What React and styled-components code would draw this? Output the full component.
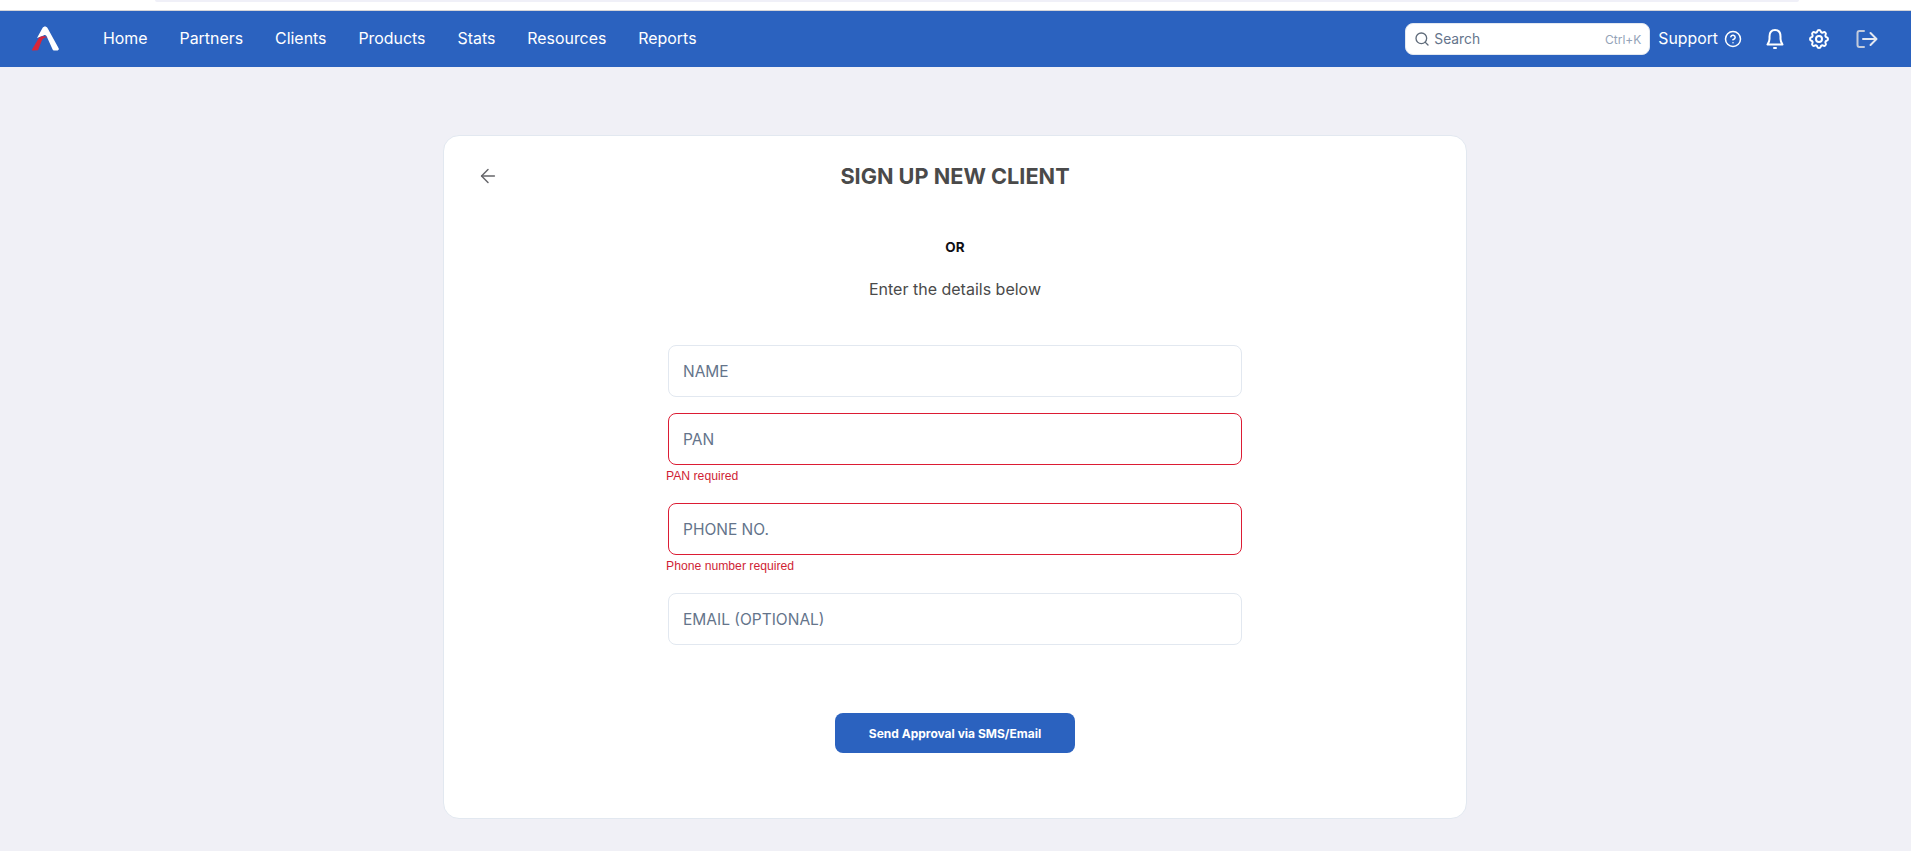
import styled, { createGlobalStyle } from "styled-components";
import { ArrowLeft, CircleHelp, Search } from "lucide-react";
import { TbSettings } from "react-icons/tb";

const GlobalStyle = createGlobalStyle`
  html, body {
    margin: 0;
    padding: 0;
    background: #f0f0f6;
    font-family: "Inter", "Liberation Sans", sans-serif;
  }
  * {
    box-sizing: border-box;
  }
`;

const NAV_LINKS = ["Home", "Partners", "Clients", "Products", "Stats", "Resources", "Reports"];

const Logo = () => (
  <LogoWrap>
    <svg width="27" height="25" viewBox="0 0 27 25">
      <path
        d="M10.5 2 C11.8 0 14.2 0 15.5 2 L26.5 22 C27.3 23.6 26.4 24.6 25 24.6 L22.5 24.6 C21.5 24.6 20.8 24 20.4 23 L14.5 10 C13.8 8.8 12.5 8.8 11.5 9.4 L5 12 Z"
        fill="#ffffff"
      />
      <path
        d="M7 11.8 C9.5 10 12.5 10 15.5 11.2 C12 11.4 10.8 12.6 9.6 15 L6 24.2 L0.8 24.6 C0 24.6 -0.2 24 0.3 23 Z"
        fill="#d9263a"
      />
    </svg>
  </LogoWrap>
);

const BellIcon = () => (
  <svg width="20" height="22" viewBox="0 0 20 22" fill="none" stroke="#ffffff" strokeWidth="2" strokeLinecap="round" strokeLinejoin="round">
    <path d="M10 2 C6 2 4.5 5 4.5 8.5 V11 C4.5 13.5 3.5 15 2.5 16.5 H17.5 C16.5 15 15.5 13.5 15.5 11 V8.5 C15.5 5 14 2 10 2 Z" />
    <path d="M9 20 H11" />
  </svg>
);

const LogoutIcon = () => (
  <svg width="22" height="20" viewBox="0 0 22 20" fill="none" strokeWidth="2" strokeLinecap="round" strokeLinejoin="round">
    <path d="M8 2 H3.5 C2.2 2 1.5 2.8 1.5 4 V16 C1.5 17.2 2.2 18 3.5 18 H8" stroke="#c3cbdc" />
    <path d="M7 10 H20 M14.5 4 L20.5 10 L14.5 16" stroke="#e4e8f1" />
  </svg>
);

const App = () => {
  return (
    <>
      <GlobalStyle />
      <TopStrip>
        <TopStripBar />
      </TopStrip>
      <Header>
        <Logo />
        <Nav>
          {NAV_LINKS.map((link) => (
            <NavLink key={link}>{link}</NavLink>
          ))}
        </Nav>
        <SearchBox>
          <Search size={16} color="#5f6b7a" />
          <SearchText>Search</SearchText>
          <Shortcut>Ctrl+K</Shortcut>
        </SearchBox>
        <Support>
          Support
          <CircleHelp size={18} />
        </Support>
        <IconButton $left={23}>
          <BellIcon />
        </IconButton>
        <IconButton $left={22}>
          <TbSettings size={24} />
        </IconButton>
        <IconButton $left={25}>
          <LogoutIcon />
        </IconButton>
      </Header>
      <Main>
        <Card>
          <TitleRow>
            <BackButton>
              <ArrowLeft size={22} strokeWidth={1.6} />
            </BackButton>
            <Title>SIGN UP NEW CLIENT</Title>
          </TitleRow>
          <Or>OR</Or>
          <Subtitle>Enter the details below</Subtitle>
          <Form>
            <Field>
              <Input placeholder="NAME" />
            </Field>
            <Field>
              <Input placeholder="PAN" $error />
              <ErrorText>PAN required</ErrorText>
            </Field>
            <Field>
              <Input placeholder="PHONE NO." $error />
              <ErrorText>Phone number required</ErrorText>
            </Field>
            <Field>
              <Input placeholder="EMAIL (OPTIONAL)" />
            </Field>
          </Form>
          <SubmitButton>Send Approval via SMS/Email</SubmitButton>
        </Card>
      </Main>
    </>
  );
};

const TopStrip = styled.div`
  height: 10px;
  background: #ffffff;
  padding: 0 112px 0 155px;
`;

const TopStripBar = styled.div`
  height: 2px;
  background: #f0f0f8;
  border-radius: 0 0 6px 6px;
`;

const Header = styled.header`
  height: 57px;
  background: #2b62bf;
  border-top: 1px solid #d4d4d8;
  display: flex;
  align-items: center;
  padding: 0 33px 0 32px;
  color: #ffffff;
`;

const LogoWrap = styled.div`
  width: 27px;
  height: 25px;
  margin-top: -1px;
  display: flex;
`;

const Nav = styled.nav`
  display: flex;
  align-items: center;
  gap: 32px;
  margin-left: 44px;
  padding-bottom: 2px;
  flex: 1;
`;

const NavLink = styled.a`
  font-size: 15.9px;
  font-weight: 400;
  color: #ffffff;
`;

const SearchBox = styled.div`
  width: 245px;
  height: 32px;
  background: #ffffff;
  border: 1px solid #e2e8f0;
  border-radius: 8px;
  display: flex;
  align-items: center;
  padding: 0 8px;
  gap: 4px;
`;

const SearchText = styled.span`
  font-size: 13.8px;
  color: #64748b;
  flex: 1;
`;

const Shortcut = styled.span`
  font-size: 12px;
  color: #94a3b8;
`;

const Support = styled.div`
  display: flex;
  align-items: center;
  gap: 6px;
  margin-left: 8px;
  padding-bottom: 1px;
  font-size: 15.8px;
  font-weight: 400;
`;

const IconButton = styled.div`
  display: flex;
  margin-left: ${(props) => props.$left}px;
`;

const Main = styled.main`
  padding: 68px 1px 32px 0;
  display: flex;
  justify-content: center;
`;

const Card = styled.section`
  width: 1024px;
  height: 684px;
  background: #ffffff;
  border: 1px solid #e2e8f0;
  border-radius: 16px;
  padding: 25px 33px 0;
  display: flex;
  flex-direction: column;
  align-items: center;
`;

const TitleRow = styled.div`
  width: 100%;
  height: 30px;
  position: relative;
  display: flex;
  justify-content: center;
  align-items: center;
`;

const BackButton = styled.div`
  position: absolute;
  left: 0;
  top: 4px;
  color: #66666a;
  display: flex;
`;

const Title = styled.h1`
  margin: 0;
  font-size: 21.7px;
  font-weight: 700;
  color: #4a4a4a;
`;

const Or = styled.div`
  margin-top: 48px;
  font-size: 13.5px;
  font-weight: 700;
  color: #0f0f14;
`;

const Subtitle = styled.p`
  margin: 24px 0 0;
  font-size: 16px;
  color: #4a4a4a;
`;

const Form = styled.div`
  width: 574px;
  margin-top: 46px;
  display: flex;
  flex-direction: column;
  gap: 16px;
`;

const Field = styled.div`
  display: flex;
  flex-direction: column;
`;

const Input = styled.input`
  width: 100%;
  height: 52px;
  border: 1px solid ${(props) => (props.$error ? "#dc1c34" : "#e2e8f0")};
  border-radius: 8px;
  padding: 1px 14px 0;
  font-family: "Inter", sans-serif;
  font-size: 15.5px;
  background: #ffffff;
  outline: none;

  &::placeholder {
    color: #64748b;
    opacity: 1;
  }
`;

const ErrorText = styled.span`
  margin: 3px 0 3px -2px;
  font-family: "Liberation Sans", sans-serif;
  font-size: 12.2px;
  line-height: 16px;
  color: #cf1f36;
`;

const SubmitButton = styled.button`
  width: 240px;
  height: 40px;
  margin-top: 68px;
  background: #2b62bf;
  border: none;
  border-radius: 8px;
  color: #ffffff;
  font-family: "Inter", sans-serif;
  font-size: 12px;
  font-weight: 700;
`;

export default App;
